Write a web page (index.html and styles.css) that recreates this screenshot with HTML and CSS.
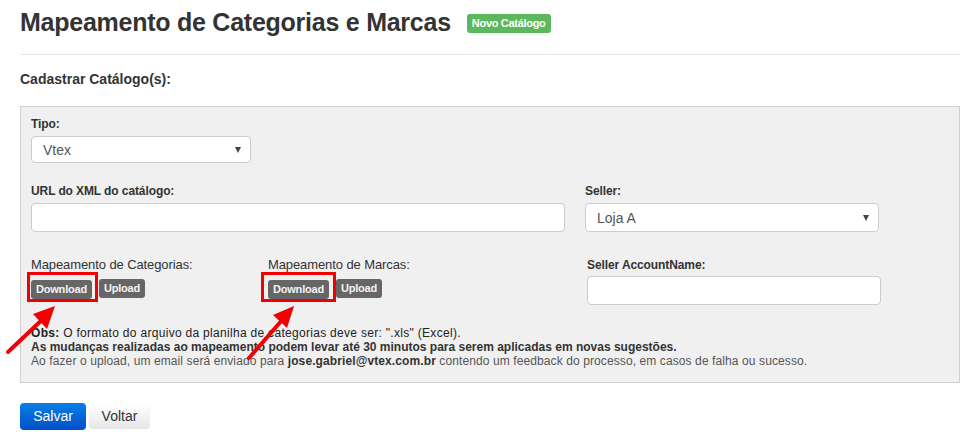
FILE: index.html
```html
<!DOCTYPE html>
<html lang="pt">
<head>
<meta charset="utf-8">
<link rel="stylesheet" href="styles.css">
</head>
<body>
<div class="page">
  <div class="header">
    <h1 class="title">Mapeamento de Categorias e Marcas</h1>
    <span class="badge">Novo Catálogo</span>
  </div>
  <div class="divider"></div>
  <h2 class="subtitle">Cadastrar Catálogo(s):</h2>

  <div class="panel">
    <div class="field">
      <label class="label">Tipo:</label>
      <div class="select select-tipo"><span>Vtex</span><i class="caret"></i></div>
    </div>

    <div class="row row-2">
      <div class="field">
        <label class="label">URL do XML do catálogo:</label>
        <div class="input input-url"></div>
      </div>
      <div class="field">
        <label class="label">Seller:</label>
        <div class="select select-seller"><span>Loja A</span><i class="caret"></i></div>
      </div>
    </div>

    <div class="row row-3">
      <div class="field">
        <label class="label regular">Mapeamento de Categorias:</label>
        <div class="btns">
          <span class="btn-wrap"><span class="btn-dark">Download</span><span class="mark mark-1"></span></span>
          <span class="btn-dark">Upload</span>
        </div>
      </div>
      <div class="field">
        <label class="label regular">Mapeamento de Marcas:</label>
        <div class="btns">
          <span class="btn-wrap"><span class="btn-dark">Download</span><span class="mark mark-2"></span></span>
          <span class="btn-dark">Upload</span>
        </div>
      </div>
      <div class="field field-acc">
        <label class="label">Seller AccountName:</label>
        <div class="input input-acc"></div>
      </div>
    </div>

    <div class="notes">
      <p class="first"><b>Obs:</b> O formato do arquivo da planilha de categorias deve ser: ".xls" (Excel).</p>
      <p class="strong">As mudanças realizadas ao mapeamento podem levar até 30 minutos para serem aplicadas em novas sugestões.</p>
      <p class="light">Ao fazer o upload, um email será enviado para <b>jose.gabriel@vtex.com.br</b> contendo um feedback do processo, em casos de falha ou sucesso.</p>
    </div>
  </div>

  <div class="actions">
    <span class="btn-primary">Salvar</span>
    <span class="btn-default">Voltar</span>
  </div>
</div>

<svg class="arrows" width="975" height="445" viewBox="0 0 975 445">
  <line x1="8" y1="352" x2="44" y2="318" stroke="#f00000" stroke-width="4" stroke-linecap="round"/>
  <polygon points="55,306 33,314 47,329" fill="#f00000"/>
  <line x1="249" y1="358" x2="283" y2="319" stroke="#f00000" stroke-width="4" stroke-linecap="round"/>
  <polygon points="294,306 273,315 287,328" fill="#f00000"/>
</svg>
</body>
</html>
```

FILE: styles.css
```css
html, body {
  margin: 0;
  padding: 0;
  background: #fff;
}
body {
  font-family: "Liberation Sans", Arial, sans-serif;
  color: #333;
  position: relative;
  width: 975px;
  height: 445px;
  overflow: hidden;
}
.page {
  padding: 8px 15px 0 20px;
}
.header {
  display: flex;
  align-items: center;
  gap: 16px;
  height: 29px;
}
.title {
  margin: 0;
  font-size: 25px;
  line-height: 29px;
  font-weight: bold;
  color: #333;
  letter-spacing: -0.25px;
}
.badge {
  display: inline-block;
  background: #5cb85c;
  color: #fff;
  font-size: 11px;
  font-weight: bold;
  line-height: 19px;
  height: 19px;
  padding: 0 5px;
  letter-spacing: -0.3px;
  border-radius: 3px;
  margin-top: 2px;
}
.divider {
  margin-top: 17px;
  height: 1px;
  background: #e8e8e8;
  width: 940px;
}
.subtitle {
  margin: 15px 0 0;
  font-size: 14px;
  line-height: 18px;
  font-weight: bold;
}
.panel {
  margin-top: 18px;
  width: 918px;
  height: 255px;
  border: 1px solid #cfcfcf;
  background: #f0f0f0;
  padding: 10px 10px 10px 10px;
}
.field {
  display: flex;
  flex-direction: column;
}
.label {
  font-size: 12px;
  line-height: 14px;
  font-weight: bold;
  color: #333;
  letter-spacing: -0.1px;
}
.label.regular {
  font-weight: normal;
  font-size: 13px;
  letter-spacing: -0.1px;
}
.select, .input {
  box-sizing: border-box;
  background: #fff;
  border: 1px solid #ccc;
  border-radius: 4px;
}
.select {
  display: flex;
  align-items: center;
  justify-content: space-between;
  padding: 0 9px 0 11px;
  font-size: 14px;
  color: #555;
}
.caret {
  width: 0;
  height: 0;
  border-left: 3.5px solid transparent;
  border-right: 3.5px solid transparent;
  border-top: 6px solid #444;
}
.select-tipo {
  margin-top: 5px;
  width: 220px;
  height: 27px;
}
.row {
  display: grid;
}
.row-2 {
  margin-top: 21px;
  grid-template-columns: 534px 294px;
  column-gap: 20px;
}
.input-url {
  margin-top: 5px;
  height: 29px;
}
.select-seller {
  margin-top: 5px;
  height: 29px;
}
.row-3 {
  margin-top: 26px;
  grid-template-columns: 237px 319px 294px;
}
.btns {
  display: flex;
  gap: 7px;
  margin-top: 7px;
}
.btn-wrap {
  position: relative;
  display: inline-block;
}
.btn-dark {
  display: inline-block;
  background: #666;
  color: #f4f4f4;
  font-size: 11px;
  font-weight: bold;
  line-height: 19px;
  height: 19px;
  padding: 0 5px;
  letter-spacing: -0.2px;
  border-radius: 3px;
}
.mark {
  position: absolute;
  left: -4px;
  top: -7px;
  right: -6px;
  bottom: -3px;
  border: 3px solid #f00000;
}
.mark-2 {
  left: -7px;
  right: -7px;
}
.input-acc {
  margin-top: 4px;
  height: 29px;
}
.notes {
  margin-top: 21px;
  font-size: 12px;
  line-height: 14px;
}
.notes p {
  margin: 0;
  color: #333;
}
.notes .first {
  color: #222;
  letter-spacing: 0.3px;
}
.notes .strong {
  font-weight: bold;
}
.notes .light {
  color: #555;
  letter-spacing: 0.1px;
}
.notes .light b {
  color: #333;
}
.actions {
  display: flex;
  gap: 3px;
  margin-top: 20px;
  align-items: center;
}
.btn-primary {
  display: inline-block;
  width: 66px;
  height: 27px;
  line-height: 27px;
  text-align: center;
  font-size: 14px;
  color: #fff;
  border-radius: 4px;
  background: linear-gradient(#0a7ee6, #0050c8);
}
.btn-default {
  display: inline-block;
  width: 61px;
  height: 25px;
  line-height: 25px;
  text-align: center;
  font-size: 14px;
  color: #333;
  border-radius: 4px;
  background: linear-gradient(#ffffff, #e6e6e6);
}
.arrows {
  position: absolute;
  left: 0;
  top: 0;
  pointer-events: none;
}
```
